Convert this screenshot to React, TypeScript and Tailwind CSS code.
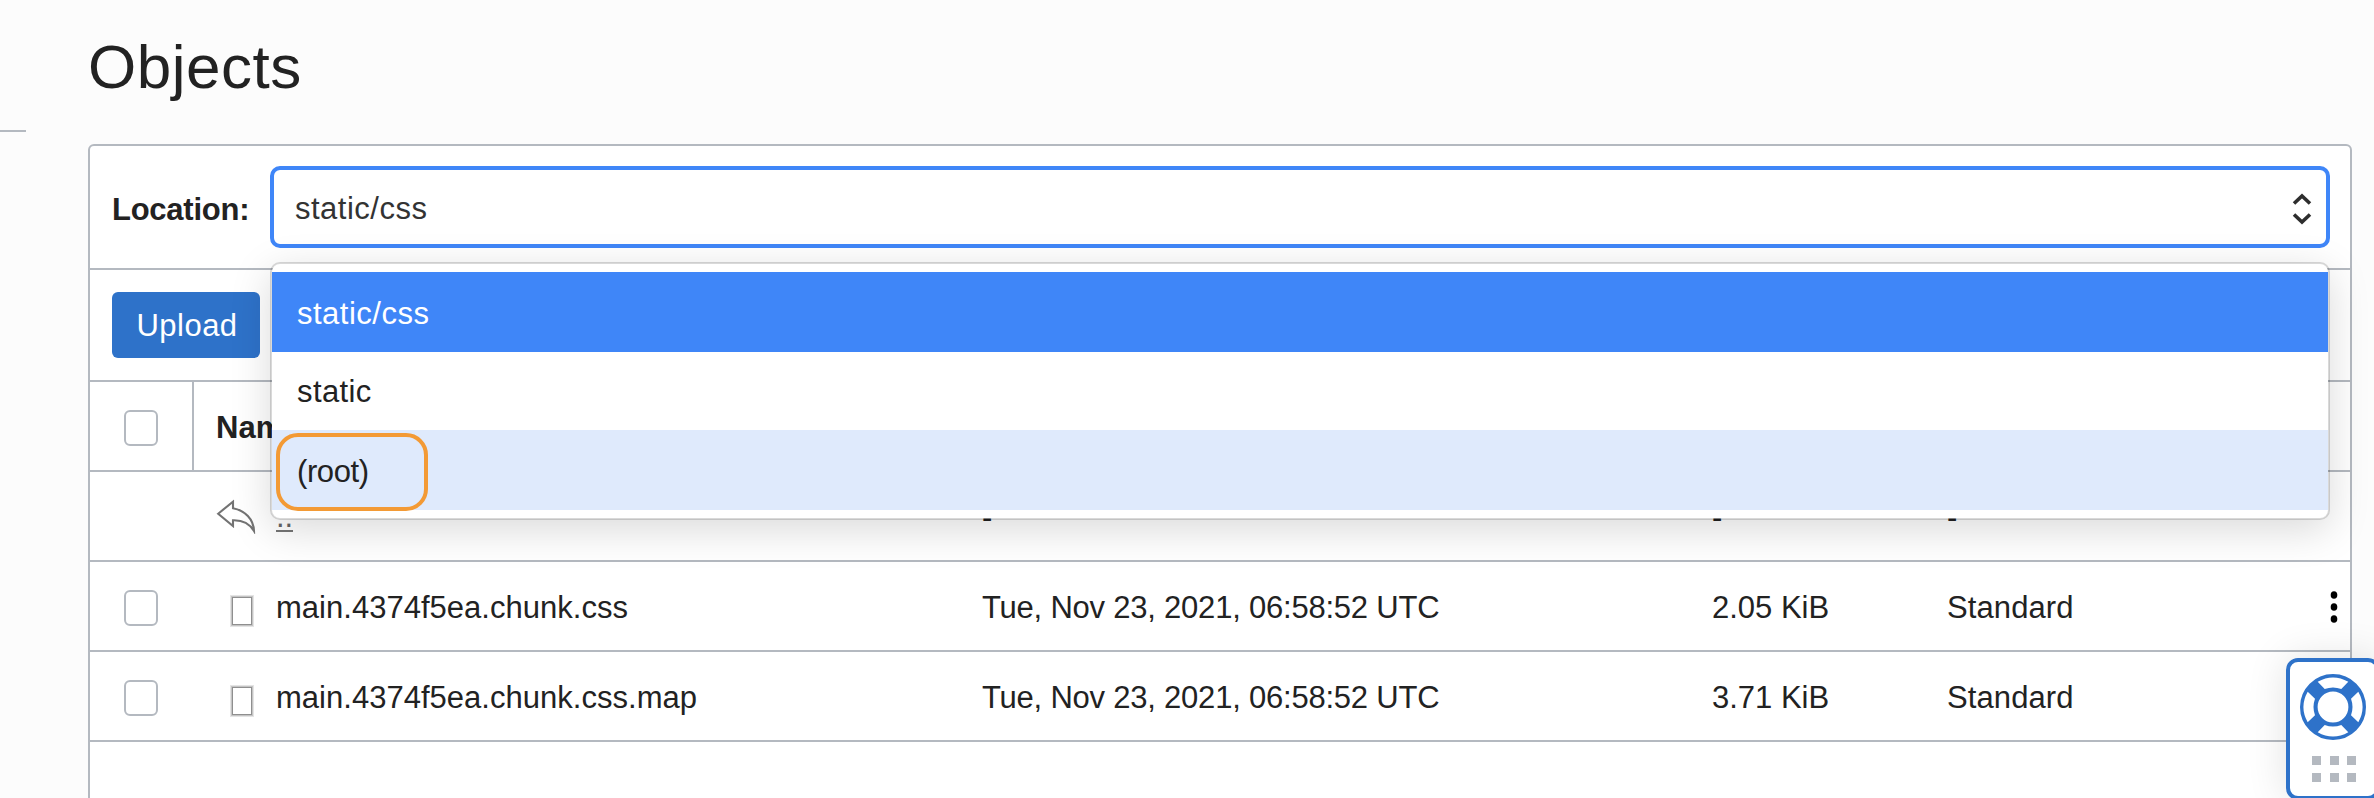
import React from "react";

const files = [
  { name: "main.4374f5ea.chunk.css", date: "Tue, Nov 23, 2021, 06:58:52 UTC", size: "2.05 KiB", tier: "Standard", menu: true },
  { name: "main.4374f5ea.chunk.css.map", date: "Tue, Nov 23, 2021, 06:58:52 UTC", size: "3.71 KiB", tier: "Standard", menu: false },
];

function Checkbox() {
  return <span className="mt-1 block h-9 w-[34px] rounded-[6px] border-2 border-[#b4b9c0] bg-white" />;
}

function Kebab() {
  return (
    <svg className="-mt-0.5 h-8 w-3" viewBox="0 0 12 32" fill="#000">
      <ellipse cx="6" cy="4" rx="3.3" ry="3.8" />
      <ellipse cx="6" cy="16" rx="3.3" ry="3.8" />
      <ellipse cx="6" cy="28" rx="3.3" ry="3.8" />
    </svg>
  );
}

function BackArrow() {
  return (
    <svg className="absolute left-[216px] top-[498px] h-9 w-10" viewBox="0 0 40 36" fill="none" stroke="#737373" strokeWidth="2.1">
      <path d="M2.2 15.7 L17 3.6 V10.2 C29 12.5 37.6 21 38 33 C33.5 25.5 26 22 17 22.3 V28 Z" />
    </svg>
  );
}

const gapPath = "M17.7 7.7 Q33 -0.9 48.3 7.7 L41.3 15 Q33 12 24.7 15 Z";

function Lifebuoy() {
  return (
    <svg className="h-[66px] w-[66px]" viewBox="0 0 66 66" fill="none">
      <circle cx="33" cy="33" r="24.2" stroke="#2e72c9" strokeWidth="17.6" />
      <g fill="#fff">
        {[0, 90, 180, 270].map((angle) => (
          <path key={angle} d={gapPath} transform={`rotate(${angle} 33 33)`} />
        ))}
      </g>
    </svg>
  );
}

const columns = "grid grid-cols-[102px_84px_706px_730px_235px_1fr]";

export default function App() {
  return (
    <div className="relative h-[798px] w-[2374px] overflow-hidden bg-[#fcfcfc] font-['Liberation_Sans',Arial,sans-serif] text-[31px] leading-[36px] text-[#222]">
      <div className="flex h-full">
        <aside className="w-[88px] shrink-0 pt-[130px]">
          <div className="h-0.5 w-[26px] bg-[#b4b9c0]" />
        </aside>
        <main className="w-[2264px]">
          <h1 className="h-[144px] pt-[31px] text-[62px] leading-[72px] tracking-[0.5px] font-normal">Objects</h1>
          <section className="h-[700px] rounded-t-[6px] border-2 border-[#b4b9c0] bg-white">
            <div className="flex h-[124px] items-start border-b-2 border-[#b4b9c0] pl-[22px] pt-5">
              <label className="w-[158px] pt-[26px] font-bold tracking-[-0.25px]">Location:</label>
              <div className="flex h-[82px] w-[2060px] items-center justify-between rounded-[10px] border-4 border-[#3f86f8] bg-white pl-[21px] pr-3">
                <span className="pt-1 tracking-[0.5px] text-[#333]">static/css</span>
                <svg className="mt-1 h-9 w-6" viewBox="0 0 24 36" fill="none" stroke="#2e2e2e" strokeWidth="3.6">
                  <path d="M4 12.5 L12 5 L20 12.5 M4 23.5 L12 31 L20 23.5" />
                </svg>
              </div>
            </div>
            <div className="flex h-[112px] items-center border-b-2 border-[#b4b9c0] pl-[22px]">
              <button className="h-[66px] w-[148px] rounded-[6px] bg-[#2e72c9] pl-0.5 pt-0.5 tracking-[0.5px] text-white">Upload</button>
            </div>
            <div className="flex h-[90px] items-center border-b-2 border-[#b4b9c0]">
              <div className="flex h-full w-[104px] items-center border-r-2 border-[#b4b9c0] pl-[34px]">
                <Checkbox />
              </div>
              <span className="pl-[22px] pt-1 font-bold">Name</span>
            </div>
            <div className={`${columns} h-[90px] items-center border-b-2 border-[#b4b9c0]`}>
              <span className="col-start-4 pt-1">-</span>
              <span className="pt-1">-</span>
              <span className="pt-1">-</span>
            </div>
            {files.map((f) => (
              <div key={f.name} className={`${columns} h-[90px] items-center border-b-2 border-[#b4b9c0]`}>
                <span className="pl-[34px]">
                  <Checkbox />
                </span>
                <span className="pl-[38px]">
                  <span className="mt-2.5 block h-8 w-6 border border-[#e4e4e4] p-px">
                    <span className="block h-full w-full border border-[#8f8f8f] outline outline-[#c4c4c4]" />
                  </span>
                </span>
                <span className="pt-1 tracking-[0.02px]">{f.name}</span>
                <span className="pt-1 tracking-[-0.22px]">{f.date}</span>
                <span className="pt-1">{f.size}</span>
                <span className="flex items-center justify-between pr-[10px] pt-1 tracking-[0.1px]">
                  {f.tier}
                  {f.menu && <Kebab />}
                </span>
              </div>
            ))}
          </section>
        </main>
      </div>

      <BackArrow />
      <span className="absolute left-[276px] top-[530px] h-0.5 w-[17px] bg-[#757575]" />
      <span className="absolute left-[276px] top-[499px] text-[#666]">..</span>

      <div className="absolute left-[270px] top-[262px] h-[258px] w-[2060px] rounded-[10px] border-2 border-black/15 bg-white bg-clip-padding py-2 shadow-[0_10px_40px_rgba(0,0,0,0.15)]">
        <div className="flex h-20 items-center bg-[#3f86f8] pl-[25px] pt-1 tracking-[0.5px] text-white">static/css</div>
        <div className="flex h-[78px] items-center pl-[25px] pt-0.5 tracking-[0.4px]">static</div>
        <div className="flex h-20 items-center bg-[#dfeafc] pl-[25px] pt-1 tracking-[-0.4px]">(root)</div>
      </div>
      <div className="absolute left-[276px] top-[433px] h-[78px] w-[152px] rounded-[22px] border-4 border-[#f39a35]" />

      <div className="absolute left-[2286px] top-[658px] flex h-[142px] w-[94px] flex-col items-center rounded-[12px] border-4 border-[#2e72c9] bg-white pt-3 shadow-[0_0_40px_rgba(0,0,0,0.12)]">
        <Lifebuoy />
        <div className="mt-4 grid grid-cols-3 gap-x-[8.5px] gap-y-2 pl-0.5">
          {[0, 1, 2, 3, 4, 5].map((i) => (
            <span key={i} className="h-[9px] w-[9px] bg-[#b4b9c0]" />
          ))}
        </div>
      </div>
    </div>
  );
}
